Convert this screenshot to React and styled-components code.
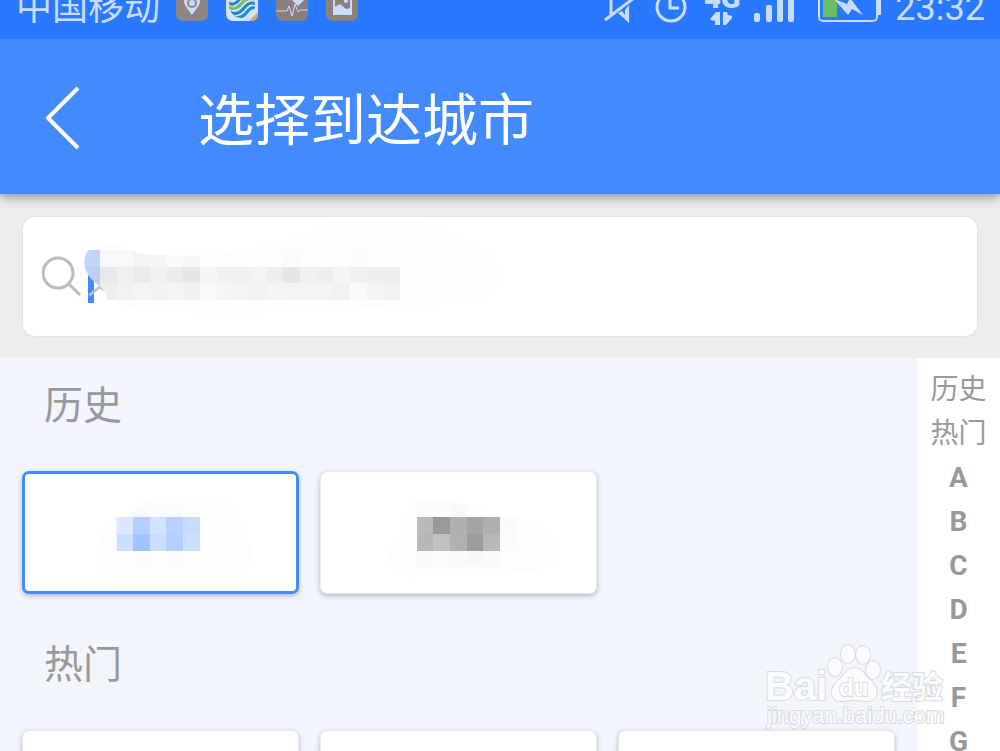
import React from "react"
import styled, {createGlobalStyle} from 'styled-components'

const GlobalStyle = createGlobalStyle`
    * {
        box-sizing: border-box;
    }
    body {
        margin: 0;
        font-family: Roboto, "Noto Sans CJK SC", sans-serif;
    }
`
const Page = styled.div`
    position: relative;
    display: flex;
    flex-direction: column;
    height: 100vh;
    overflow: hidden;
    background-color: #f2f5fb;
`
const StatusBar = styled.div`
    position: relative;
    z-index: 2;
    flex: none;
    display: flex;
    justify-content: space-between;
    align-items: flex-end;
    height: 39px;
    padding: 0 15px 13px 16px;
    background-color: #2979ff;
    color: #c9dcff;
`
const StatusGroup = styled.div`
    display: flex;
    align-items: flex-end;
    gap: ${({$gap}) => $gap}px;
    svg {
        flex: none;
        margin-bottom: 2px;
        overflow: visible;
    }
`
const StatusText = styled.span`
    font-size: 36px;
    line-height: 36px;
    white-space: nowrap;
`
const Carrier = styled(StatusText)`
    margin-right: -2px;
`
const Header = styled.header`
    position: relative;
    z-index: 1;
    flex: none;
    display: flex;
    align-items: center;
    height: 155px;
    padding-left: 36px;
    background-color: #448aff;
    box-shadow: 0 3px 10px rgba(0, 0, 0, 0.4);
`
const Back = styled.button`
    display: flex;
    margin: 0 108px 0 0;
    padding: 0;
    border: none;
    background: none;
    cursor: pointer;
`
const Title = styled.h1`
    margin: 0;
    padding-top: 8px;
    color: #fff;
    font-size: 56px;
    line-height: 64px;
    font-weight: 400;
`
const SearchArea = styled.div`
    flex: none;
    padding: 22px 22px 21px;
    background-color: #ececec;
`
const SearchBox = styled.label`
    position: relative;
    display: flex;
    align-items: center;
    height: 121px;
    padding-left: 19px;
    border: 1px solid #e4e4e4;
    border-radius: 13px;
    background-color: #fff;
`
const SearchInput = styled.input`
    flex: 1;
    min-width: 0;
    height: 60px;
    padding: 0 8px;
    border: none;
    outline: none;
    background: none;
    font: inherit;
    font-size: 40px;
`
const SearchCover = styled.svg`
    position: absolute;
    top: 2px;
    left: 57px;
    pointer-events: none;
`
const Body = styled.div`
    flex: 1;
    display: flex;
    min-height: 0;
`
const Cities = styled.main`
    flex: 1;
    min-width: 0;
    overflow: hidden;
`
const Section = styled.section`
    padding-bottom: 23px;
`
const SectionTitle = styled.h2`
    margin: 0 0 22px;
    padding: 6px 44px 0;
    border-bottom: 1px solid #f0f3f8;
    color: #999;
    font-size: 39px;
    line-height: 84px;
    font-weight: 400;
`
const CityGrid = styled.div`
    display: grid;
    grid-template-columns: repeat(3, 1fr);
    gap: 21px;
    padding: 0 22px;
`
const City = styled.button`
    display: flex;
    align-items: center;
    justify-content: center;
    height: 123px;
    padding: 0;
    border: ${({$active}) => $active ? '3px solid #448aff' : '1px solid #e6e9ee'};
    border-radius: 7px;
    background-color: #fff;
    box-shadow: 0 2px 5px rgba(0, 0, 0, 0.25);
    cursor: pointer;
`
const Index = styled.nav`
    flex: none;
    display: flex;
    flex-direction: column;
    width: 83px;
    padding-top: 10px;
    overflow: hidden;
    background-color: #fff;
`
const IndexLink = styled.a`
    flex: none;
    color: #999;
    font-size: 28px;
    line-height: 44px;
    font-weight: ${({$letter}) => $letter ? 700 : 400};
    text-align: center;
    text-decoration: none;
`
const Watermark = styled.svg`
    position: absolute;
    right: 50px;
    bottom: 16px;
    z-index: 2;
    pointer-events: none;
`

// one array per row, null leaves the cell out
const Mosaic = ({x, y, rows}) => (
    <g shapeRendering="crispEdges">
        {rows.map((row, r) => row.map((color, c) => color && (
            <rect key={`${r}-${c}`} x={x + c * 50} y={y + r * 50} width="50" height="50" fill={color} />
        )))}
    </g>
)

const searchRows = [
    ['#f6f8fb', '#f8f8f8', '#f3f3f3', '#f5f5f5', '#fafafa', '#f6f6f6', '#fdfdfd', null, null, null, null, '#fbfbfb', null, null, null, '#fcfcfc'],
    ['#e6e8ec', '#efefef', '#eaeaea', '#f0f0f0', '#ebebeb', '#e6e6e6', '#f5f5f5', '#f0f0f0', '#f0f0f0', '#f3f3f3', '#eeeeee', '#e6e6e6', '#f0f0f0', '#ededed', '#f4f4f4', '#f0f0f0', '#eeeeee', '#eeeeee'],
    ['#ededf0', '#f1f1f1', '#f4f4f4', '#f2f2f2', '#f4f4f4', '#f0f0f0', '#f8f8f8', '#f5f5f5', '#f3f3f3', '#f2f2f2', '#f4f4f4', '#f3f3f3', '#f3f3f3', '#f3f3f3', '#f1f1f1', '#f9f9f9', '#f4f4f4', '#f1f1f1'],
]
const blueRows = [
    [null, '#f8faff', '#fbfcff', '#fbfcff'],
    ['#dce8ff', '#b3d0ff', '#d2e3ff', '#b8d2ff', '#c8dcff', '#fcfdff'],
    ['#cddfff', '#a0c4ff', '#cbdeff', '#b2cfff', '#ccdfff', '#fcfdff'],
    ['#fcfdff', '#fafcff', '#fcfdff', '#fafcff', '#fcfdff'],
]
const grayRows = [
    ['#fcfcfc', '#fcfcfc', '#f9f9f9', null, null],
    ['#bababa', '#999999', '#b0b0b0', '#a4a4a4', '#b0b0b0', '#fafafa'],
    ['#b7b7b7', '#c0c0c0', '#b1b1b1', '#9c9c9c', '#b8b8b8', '#fbfbfb'],
    ['#f9f9f9', '#fbfbfb', '#f9f9f9', '#f7f7f7', '#f9f9f9'],
]

const AppIcon = ({fill, children}) => (
    <svg width="32" height="35" viewBox="0 -3 32 35">
        <rect x="0" y="-3" width="32" height="32" rx="7" fill={fill} />
        {children}
    </svg>
)

const StatusIcons = () => (
    <>
        <svg width="39" height="32" viewBox="604 -8 39 32" fill="none" stroke="#c9dcff" strokeWidth="3">
            <path d="M605 20 L634 -2 M611 -8 V14" />
            <path d="M618 13 L629 23 V5 L625 10 V15 L622 11 Z" fill="#c9dcff" stroke="none" />
        </svg>
        <svg width="35" height="32" viewBox="656 -8 35 32" fill="none" stroke="#c9dcff" strokeWidth="3">
            <circle cx="671" cy="7" r="14" />
            <path d="M670 -2 V8 H679" />
        </svg>
        <svg width="36" height="32" viewBox="704 -8 36 32" fill="#c9dcff">
            <text x="704" y="8" fontFamily="Roboto" fontSize="29" fontWeight="900">4G</text>
            <path d="M710 19 L716 12 H720 V25 H715 V21 L711 20 Z M723 12 H727 L728 15 L732 16 V18 L726 25 H723 Z" />
        </svg>
        <svg width="52" height="32" viewBox="753 -8 52 32" fill="#c9dcff">
            <rect x="754" y="13" width="6" height="9" rx="2" />
            <rect x="766" y="5" width="6" height="17" rx="2" />
            <rect x="777" y="-3" width="6" height="25" rx="2" />
            <rect x="788" y="-11" width="6" height="33" rx="2" />
        </svg>
        <svg width="64" height="32" viewBox="818 -8 64 32">
            <rect x="819" y="-14" width="58" height="35" rx="4" fill="none" stroke="#c9dcff" strokeWidth="2" />
            <rect x="877" y="-6" width="4" height="21" rx="1" fill="#c9dcff" />
            <rect x="823" y="-10" width="14" height="27" fill="#69bd62" />
            <path d="M834 -1 L848 15 L852 9 L863 15 L850 -2 L847 4 Z" fill="#c9dcff" />
        </svg>
    </>
)

const index = ['历史', '热门', ...'ABCDEFGHIJKLMNOPQRSTUVWXYZ']

const App = () => (
    <Page>
        <GlobalStyle />
        <StatusBar>
            <StatusGroup $gap={18}>
                <Carrier>中国移动</Carrier>
                <AppIcon fill="#8d8580">
                    <path d="M16 23 C13 18 8 14 8 9 A8 8 0 0 1 24 9 C24 14 19 18 16 23 Z" fill="#c9dcff" />
                    <circle cx="16" cy="11" r="4" fill="none" stroke="#8d8580" strokeWidth="2" />
                </AppIcon>
                <AppIcon fill="#d3e3fc">
                    <clipPath id="disc">
                        <circle cx="16" cy="13" r="13" />
                    </clipPath>
                    <g fill="none" strokeWidth="3" clipPath="url(#disc)">
                        <path d="M2 10 C6 14 10 12 14 7 C18 2 22 0 27 3" stroke="#1e88c8" />
                        <path d="M2 15 C7 18 11 17 16 11 C20 6 24 5 30 8" stroke="#7cba5c" />
                        <path d="M4 20 C9 23 14 21 18 16 C22 11 25 10 30 12" stroke="#1e88c8" />
                        <path d="M8 25 C14 27 18 24 21 20 C24 16 26 15 29 16" stroke="#1e88c8" />
                    </g>
                    <path d="M23 29 L32 20 V23 Q31 29 25 29 Z" fill="#d5a06d" />
                </AppIcon>
                <AppIcon fill="#8c7e7d">
                    <path d="M15 7 L22 14 L29 7 V-3 H15 Z" fill="#c9dcff" />
                    <path d="M0 19 H11 L13 14 L16 24 L19 12 L22 20 L24 18 H32" fill="none" stroke="#c9dcff" />
                </AppIcon>
                <AppIcon fill="#8a827a">
                    <rect x="8" y="2" width="17" height="20" fill="none" stroke="#c9dcff" strokeWidth="2" />
                    <path d="M8 15 L14 12 L20 17 L25 16 V22 H8 Z" fill="#c9dcff" />
                    <circle cx="20" cy="9" r="2" fill="#c9dcff" />
                </AppIcon>
            </StatusGroup>
            <StatusGroup $gap={13}>
                <StatusIcons />
                <StatusText>23:32</StatusText>
            </StatusGroup>
        </StatusBar>
        <Header>
            <Back aria-label="返回">
                <svg width="54" height="70" viewBox="0 0 54 70" fill="none" stroke="#fff" strokeWidth="4">
                    <path d="M42 6 L12 36 L42 66" strokeLinejoin="round" />
                </svg>
            </Back>
            <Title>选择到达城市</Title>
        </Header>
        <SearchArea>
            <SearchBox>
                <svg width="40" height="44" viewBox="0 0 40 44" fill="none" stroke="#bbb" strokeWidth="3">
                    <circle cx="16" cy="18" r="15" />
                    <path d="M26 28 L38 40" />
                </svg>
                <SearchInput type="text" aria-label="搜索城市" />
                <SearchCover width="420" height="115" viewBox="180 27 1260 345">
                    <path d="M192 160 Q195 110 240 100 Q300 95 360 130 C500 150 700 130 860 70 C950 10 1160 10 1240 50 L1400 120 Q1440 160 1436 200 Q1430 260 1360 280 L700 310 Q500 315 300 290 Z" fill="#fdfdfd" />
                    <rect x="204" y="120" width="18" height="159" fill="#448aff" />
                    <path d="M208 256 L239 231 L252 240" fill="none" stroke="#c4c4c4" strokeWidth="8" />
                    <path d="M205 120 H240 V228 Q195 200 193 160 Q193 135 205 120 Z" fill="#c1d6fb" />
                    <path d="M204 170 H240 V228 Q205 202 196 170 Z" fill="#bfcfed" />
                    <clipPath id="cover">
                        <path d="M240 120 H330 L358 131 Q420 138 550 137 L790 120 H1200 V270 H264 Q255 240 240 228 Z" />
                    </clipPath>
                    <g clipPath="url(#cover)">
                        <Mosaic x={240} y={120} rows={searchRows} />
                    </g>
                </SearchCover>
            </SearchBox>
        </SearchArea>
        <Body>
            <Cities>
                <Section>
                    <SectionTitle>历史</SectionTitle>
                    <CityGrid>
                        <City $active aria-label="历史城市 1">
                            <svg width="202" height="94" viewBox="181 376 606 282">
                                <path d="M300 540 Q320 460 400 450 Q420 405 480 405 H650 Q730 420 725 520 Q770 560 758 600 Q740 655 680 655 H360 Q290 640 290 590 Z" fill="#fdfdfe" />
                                <clipPath id="blue">
                                    <path d="M350 470 L400 450 L450 420 H700 V620 H350 Z" />
                                </clipPath>
                                <g clipPath="url(#blue)">
                                    <Mosaic x={350} y={420} rows={blueRows} />
                                </g>
                            </svg>
                        </City>
                        <City aria-label="历史城市 2">
                            <svg width="202" height="94" viewBox="174 76 606 282">
                                <path d="M320 220 Q300 120 370 110 Q450 110 600 165 C720 180 776 210 776 260 Q770 330 710 332 L320 350 Q265 340 265 280 Q270 240 320 220 Z" fill="#fdfdfd" />
                                <clipPath id="gray">
                                    <path d="M350 120 H450 L600 166 H700 V320 H350 Z" />
                                </clipPath>
                                <g clipPath="url(#gray)">
                                    <Mosaic x={350} y={120} rows={grayRows} />
                                </g>
                            </svg>
                        </City>
                    </CityGrid>
                </Section>
                <Section>
                    <SectionTitle>热门</SectionTitle>
                    <CityGrid>
                        <City aria-label="热门城市 1" />
                        <City aria-label="热门城市 2" />
                        <City aria-label="热门城市 3" />
                    </CityGrid>
                </Section>
            </Cities>
            <Index>
                {index.map((name) => (
                    <IndexLink key={name} href={`#${name}`} $letter={name.length === 1}>{name}</IndexLink>
                ))}
            </Index>
        </Body>
        <Watermark width="190" height="95" viewBox="760 640 190 95" fill="#fafbfd" stroke="#d9dbdf" strokeWidth="2" paintOrder="stroke">
            <g fontFamily="Liberation Sans, Noto Sans CJK SC, sans-serif" fontWeight="700">
                <text x="765" y="700" fontSize="40">Bai</text>
                <text x="881" y="698" fontSize="31">经验</text>
                <text x="767" y="723" fontSize="22" fontWeight="400">jingyan.baidu.com</text>
                <ellipse cx="848" cy="654" rx="7" ry="9" />
                <ellipse cx="863" cy="655" rx="7" ry="9" />
                <ellipse cx="835" cy="667" rx="7" ry="9" />
                <ellipse cx="873" cy="670" rx="7" ry="9" />
                <path d="M854 668 C861 668 864 674 870 680 C880 688 878 701 868 701 C861 701 860 700 854 700 C848 700 848 701 841 701 C830 701 829 688 838 681 C845 675 846 668 854 668 Z" />
                <text x="839" y="696" fontSize="24">du</text>
            </g>
        </Watermark>
    </Page>
)

export default App
